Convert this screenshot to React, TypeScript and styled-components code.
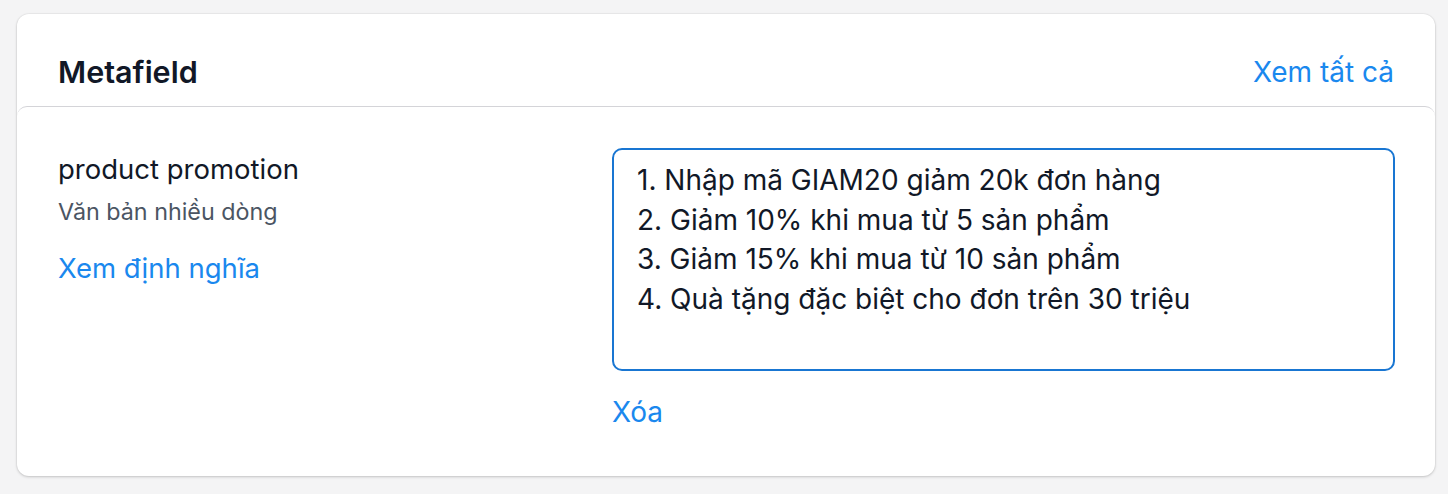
import styled, { createGlobalStyle } from "styled-components";

const GlobalStyle = createGlobalStyle`
    * { box-sizing: border-box; }
    body {
        margin: 0;
        background: #f4f4f5;
        font-family: Inter, "Noto Sans", sans-serif;
        color: #111827;
    }
`;

const Page = styled.div`
    padding: 14px 13px 18px 17px;
`;

const Card = styled.section`
    background: #fff;
    border-radius: 12px;
    box-shadow: 0 1px 3px rgba(0, 0, 0, 0.18), 0 0 0 1px rgba(0, 0, 0, 0.03);
    display: flex;
    flex-direction: column;
    height: 462px;
`;

const Header = styled.div`
    height: 92px;
    display: flex;
    align-items: flex-end;
    justify-content: space-between;
    padding: 0 41px 16px 41px;
`;

const Title = styled.h2`
    margin: 0;
    font-size: 30.5px;
    font-weight: 600;
    line-height: 36px;
    color: #111827;
`;

const Link = styled.a<{ $size?: number }>`
    color: #1a88ee;
    font-size: ${(p) => p.$size ?? 28}px;
    text-decoration: none;
    cursor: pointer;
    line-height: 36px;
`;

const Body = styled.div`
    flex: 1;
    border-top: 1px solid #d4d4d8;
    border-radius: 10px 10px 12px 12px;
    display: grid;
    grid-template-columns: 554px 1fr;
    padding: 41px 40px 0 41px;
`;

const Info = styled.div`
    display: flex;
    flex-direction: column;
    align-items: flex-start;
`;

const Name = styled.div`
    font-size: 27.5px;
    line-height: 42px;
    color: #111827;
`;

const Type = styled.div`
    font-size: 23.3px;
    line-height: 32px;
    color: #4b5563;
    margin-top: 6px;
    margin-bottom: 22px;
`;

const Field = styled.div`
    display: flex;
    flex-direction: column;
    align-items: flex-start;
    gap: 23px;
`;

const TextArea = styled.textarea`
    width: 100%;
    height: 223px;
    border: 2px solid #1976d2;
    border-radius: 10px;
    padding: 11px 23px;
    font-family: Inter, "Noto Sans", sans-serif;
    font-size: 28px;
    line-height: 39.5px;
    color: #111827;
    resize: none;
    outline: none;
`;

const promo = [
    "1. Nhập mã GIAM20 giảm 20k đơn hàng",
    "2. Giảm 10% khi mua từ 5 sản phẩm",
    "3. Giảm 15% khi mua từ 10 sản phẩm",
    "4. Quà tặng đặc biệt cho đơn trên 30 triệu",
].join("\n");

export default function App() {
    return (
        <>
            <GlobalStyle />
            <Page>
                <Card>
                    <Header>
                        <Title>Metafield</Title>
                        <Link>Xem tất cả</Link>
                    </Header>
                    <Body>
                        <Info>
                            <Name>product promotion</Name>
                            <Type>Văn bản nhiều dòng</Type>
                            <Link $size={27.5}>Xem định nghĩa</Link>
                        </Info>
                        <Field>
                            <TextArea readOnly defaultValue={promo} />
                            <Link>Xóa</Link>
                        </Field>
                    </Body>
                </Card>
            </Page>
        </>
    );
}
